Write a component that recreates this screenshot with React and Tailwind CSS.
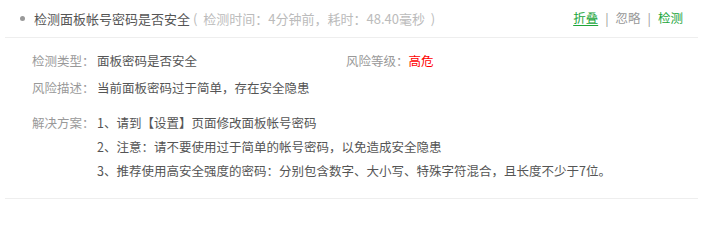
export default function App() {
  const font = { fontFamily: '"Noto Sans CJK SC", "Noto Sans", sans-serif' };

  return (
    <div className="w-[714px] h-[204px] bg-white" style={font}>
      <div className="ml-[5px] w-[693px] border-b border-[#eeeeee]">
        {/* Title row */}
        <div className="h-[38px] flex items-center justify-between pl-[15px] pr-[15px] border-b border-[#eeeeee]">
          <div className="flex items-center text-[13px] leading-none">
            <span className="w-[5px] h-[5px] rounded-full bg-[#999999] mr-[9px]" />
            <span className="text-[#555555]">检测面板帐号密码是否安全</span>
            <span className="text-[#bbbbbb] ml-[3px] whitespace-pre">(  检测时间：4分钟前，耗时：48.40毫秒  )</span>
          </div>
          <div className="flex items-center text-[12.5px] leading-none">
            <a className="text-[#20a53a] underline underline-offset-2 cursor-pointer">折叠</a>
            <span className="text-[#999999] mx-[7px]">|</span>
            <a className="text-[#999999] cursor-pointer">忽略</a>
            <span className="text-[#999999] mx-[7px]">|</span>
            <a className="text-[#20a53a] cursor-pointer">检测</a>
          </div>
        </div>

        {/* Details */}
        <div className="pl-[27px] pt-[11px] pb-[15px] text-[12.5px] leading-[24px]">
          <div className="flex">
            <div className="w-[314px] flex">
              <span className="w-[65px] text-[#999999]">检测类型：</span>
              <span className="text-[#555555]">面板密码是否安全</span>
            </div>
            <div className="flex">
              <span className="text-[#999999]">风险等级：</span>
              <span className="text-[#ff0000]">高危</span>
            </div>
          </div>

          <div className="flex mt-[3px]">
            <span className="w-[65px] text-[#999999]">风险描述：</span>
            <span className="text-[#555555]">当前面板密码过于简单，存在安全隐患</span>
          </div>

          <div className="flex mt-[11px]">
            <span className="w-[65px] shrink-0 text-[#999999]">解决方案：</span>
            <div className="flex flex-col text-[#555555]">
              <span>1、请到【设置】页面修改面板帐号密码</span>
              <span>2、注意：请不要使用过于简单的帐号密码，以免造成安全隐患</span>
              <span>3、推荐使用高安全强度的密码：分别包含数字、大小写、特殊字符混合，且长度不少于7位。</span>
            </div>
          </div>
        </div>
      </div>
    </div>
  );
}
